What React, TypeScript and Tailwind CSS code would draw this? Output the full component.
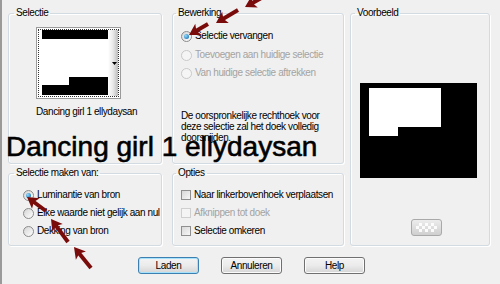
import React from "react"

type Pt = [number, number]

const arrows: { tip: Pt; tail: Pt }[] = [
  { tip: [245, 7], tail: [265, -4] },
  { tip: [216, 23], tail: [238, 10] },
  { tip: [189, 35], tail: [208, 24] },
  { tip: [27, 197], tail: [46, 211] },
  { tip: [51, 219], tail: [68, 242] },
  { tip: [74, 247], tail: [91, 268] },
]

function Arrow({ tip, tail }: { tip: Pt; tail: Pt }) {
  const dx = tip[0] - tail[0]
  const dy = tip[1] - tail[1]
  const len = Math.hypot(dx, dy)
  const ux = dx / len
  const uy = dy / len
  const px = -uy
  const py = ux
  const bx = tip[0] - ux * 11
  const by = tip[1] - uy * 11
  return (
    <g fill="#7a0b0b">
      <line
        x1={tail[0]}
        y1={tail[1]}
        x2={bx + ux * 3}
        y2={by + uy * 3}
        stroke="#7a0b0b"
        strokeWidth={4}
      />
      <polygon
        points={`${tip[0]},${tip[1]} ${bx + px * 6.5},${by + py * 6.5} ${bx + ux * 2.5},${by + uy * 2.5} ${bx - px * 6.5},${by - py * 6.5}`}
      />
    </g>
  )
}

function Radio({ checked, disabled }: { checked?: boolean; disabled?: boolean }) {
  return (
    <span
      className={`flex h-[11px] w-[11px] shrink-0 items-center justify-center rounded-full border ${
        disabled
          ? "border-[#c9c9c9] bg-[#f5f5f5]"
          : "border-[#8b8b8b] bg-gradient-to-br from-[#d4d4d4] to-white"
      }`}>
      {checked && (
        <span className="h-[5px] w-[5px] rounded-full bg-[radial-gradient(circle_at_35%_35%,#8fdcff,#0c5ea6)]" />
      )}
    </span>
  )
}

function Check({ disabled }: { disabled?: boolean }) {
  return (
    <span
      className={`h-[10px] w-[10px] shrink-0 border ${
        disabled
          ? "border-[#cfcfcf] bg-[#f4f4f4]"
          : "border-[#8f8f8f] bg-gradient-to-br from-[#d8d8d8] to-[#f7f7f7]"
      }`}
    />
  )
}

function Row({
  label,
  disabled,
  children,
  className = "",
}: {
  label: string
  disabled?: boolean
  children: React.ReactNode
  className?: string
}) {
  return (
    <div className={`flex h-[12px] items-center gap-[3px] ${className}`}>
      {children}
      <span className={`leading-[12px] ${disabled ? "text-[#a3a3a3]" : "text-black"}`}>
        {label}
      </span>
    </div>
  )
}

function GroupBox({
  title,
  className,
  legendClass,
  children,
}: {
  title: string
  className: string
  legendClass: string
  children: React.ReactNode
}) {
  return (
    <fieldset
      className={`rounded-[3px] border border-[#d2dbe1] shadow-[inset_1px_1px_0_#fff,1px_1px_0_#fff] ${className}`}>
      <legend className={`px-[2px] leading-[12px] text-black ${legendClass}`}>{title}</legend>
      {children}
    </fieldset>
  )
}

function Btn({ label, primary }: { label: string; primary?: boolean }) {
  return (
    <button
      className={`h-[17px] w-[61px] rounded-[3px] border bg-gradient-to-b from-[#f3f3f3] via-[#ebebeb] to-[#d5d5d5] leading-none text-black ${
        primary
          ? "border-[#3c7fb1] shadow-[inset_0_0_0_1px_#a6e2fb]"
          : "border-[#707070] shadow-[inset_0_0_0_1px_#fbfbfb]"
      }`}>
      {label}
    </button>
  )
}

export default function App() {
  return (
    <div className="relative h-[284px] w-[500px] overflow-hidden bg-[#f0f0f0] font-['Liberation_Sans',Arial,sans-serif] text-[10px] tracking-[-0.4px]">
      <div className="h-full border-l-2 border-[#9a9a9a] pl-[6px] pt-[7px]">
        <div className="flex">
          <div className="flex w-[154px] flex-col">
            <GroupBox title="Selectie" className="h-[157px]" legendClass="ml-[5px]">
              <div className="ml-[27px] mt-[8px] h-[72px] w-[85px] border border-[#9a9a9a] bg-white p-[1px]">
                <div className="flex h-full border border-dotted border-[#333] pl-[3px]">
                  <div className="flex w-[66px] flex-col">
                    <div className="h-[9px] bg-black" />
                    <div className="flex-1" />
                    <div className="ml-[27px] h-[8px] bg-black" />
                    <div className="mb-[1px] h-[10px] bg-black" />
                  </div>
                  <div className="flex w-[10px] items-center justify-end bg-gradient-to-r from-white via-[#e9e9e9] to-[#bcbcbc] pr-[1px]">
                    <svg width="5" height="3" viewBox="0 0 5 3">
                      <polygon points="0,0 5,0 2.5,3" fill="#000" />
                    </svg>
                  </div>
                </div>
              </div>
              <div className="ml-[27px] mt-[7px] leading-[12px]">Dancing girl 1 ellydaysan</div>
            </GroupBox>
            <GroupBox
              title="Selectie maken van:"
              className="mt-[3px] h-[79px] pl-[14px]"
              legendClass="ml-[-9px]">
              <Row label="Luminantie van bron" className="mt-[10px]">
                <Radio checked />
              </Row>
              <Row label="Elke waarde niet gelijk aan nul" className="mt-[6px]">
                <Radio />
              </Row>
              <Row label="Dekking van bron" className="mt-[6px]">
                <Radio />
              </Row>
            </GroupBox>
          </div>

          <div className="ml-[10px] flex w-[172px] flex-col">
            <GroupBox title="Bewerking" className="h-[157px] pl-[8px]" legendClass="ml-[-5px]">
              <Row label="Selectie vervangen" className="mt-[11px]">
                <Radio checked />
              </Row>
              <Row label="Toevoegen aan huidige selectie" disabled className="mt-[7px]">
                <Radio disabled />
              </Row>
              <Row label="Van huidige selectie aftrekken" disabled className="mt-[6px]">
                <Radio disabled />
              </Row>
              <p className="mt-[31px] leading-[11px]">
                De oorspronkelijke rechthoek voor
                <br />
                deze selectie zal het doek volledig
                <br />
                doorsnijden.
              </p>
            </GroupBox>
            <GroupBox title="Opties" className="mt-[3px] h-[79px] pl-[8px]" legendClass="ml-[-5px]">
              <Row label="Naar linkerbovenhoek verplaatsen" className="mt-[10px]">
                <Check />
              </Row>
              <Row label="Afknippen tot doek" disabled className="mt-[6px]">
                <Check disabled />
              </Row>
              <Row label="Selectie omkeren" className="mt-[6px]">
                <Check />
              </Row>
            </GroupBox>
          </div>

          <div className="ml-[6px] w-[140px]">
            <GroupBox title="Voorbeeld" className="h-[239px] pl-[9px]" legendClass="ml-[-5px]">
              <div className="mt-[64px] flex h-[95px] w-[117px] flex-col bg-black pl-[9px] pt-[5px]">
                <div className="h-[39px] w-[72px] bg-white" />
                <div className="h-[9px] w-[29px] bg-white" />
              </div>
              <div className="ml-[51px] mt-[41px] flex h-[17px] w-[31px] items-center justify-center rounded-[3px] border border-[#a9a9a9] bg-gradient-to-b from-[#ededed] to-[#cfcfcf]">
                <svg width="21" height="10" viewBox="0 0 21 10">
                  <g fill="#fff" opacity="0.9">
                    <rect x="3" y="0" width="3" height="3" />
                    <rect x="9" y="0" width="3" height="3" />
                    <rect x="15" y="0" width="3" height="3" />
                    <rect x="0" y="3" width="3" height="3" />
                    <rect x="6" y="3" width="3" height="3" />
                    <rect x="12" y="3" width="3" height="3" />
                    <rect x="18" y="3" width="3" height="3" />
                    <rect x="3" y="6" width="3" height="3" />
                    <rect x="9" y="6" width="3" height="3" />
                    <rect x="15" y="6" width="3" height="3" />
                  </g>
                </svg>
              </div>
            </GroupBox>
          </div>
        </div>

        <div className="ml-[130px] mt-[11px] flex gap-[22px]">
          <Btn label="Laden" primary />
          <Btn label="Annuleren" />
          <Btn label="Help" />
        </div>
      </div>

      <div className="absolute left-[6px] top-[133px] text-[28px] leading-[28px] tracking-normal text-black [-webkit-text-stroke:0.6px_#000]">
        Dancing girl 1 ellydaysan
      </div>

      <svg className="pointer-events-none absolute left-0 top-0" width="500" height="284">
        {arrows.map((a, i) => (
          <Arrow key={i} tip={a.tip} tail={a.tail} />
        ))}
      </svg>
    </div>
  )
}
